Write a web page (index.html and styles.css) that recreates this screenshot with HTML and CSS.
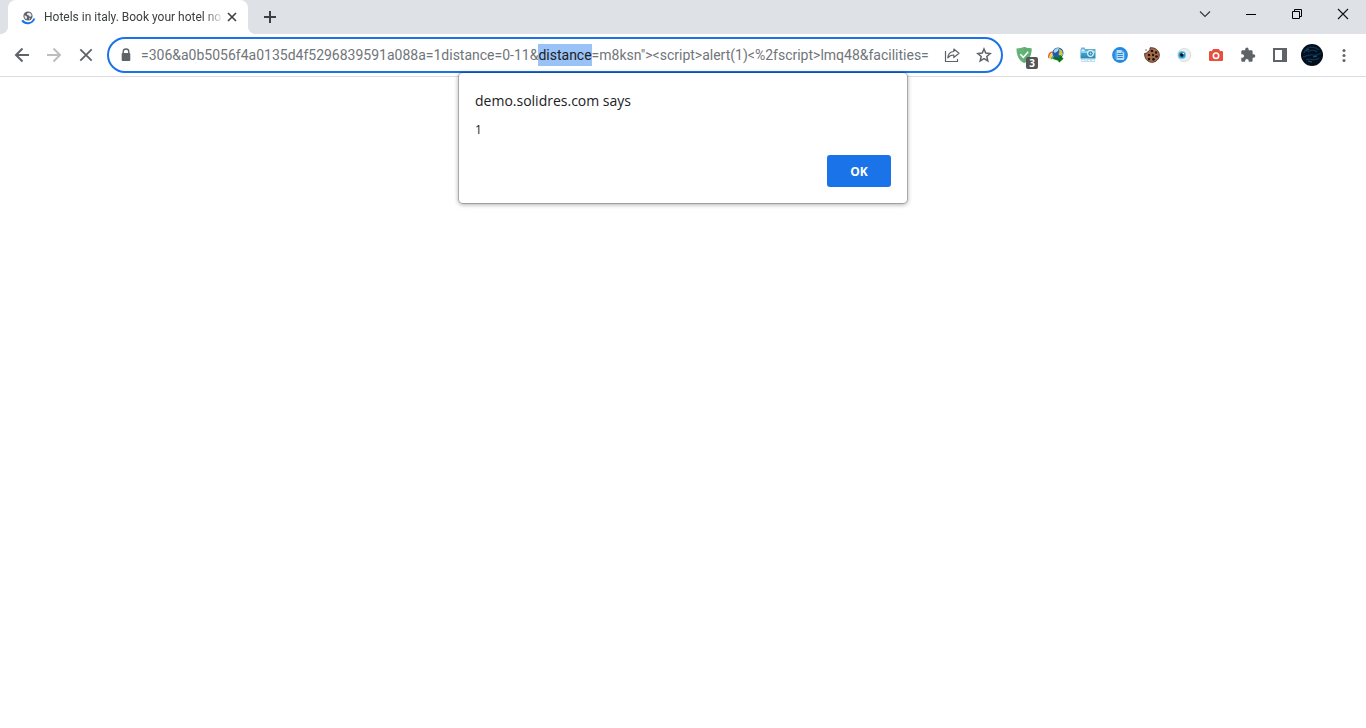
FILE: index.html
```html
<!DOCTYPE html>
<html lang="en">
<head>
<meta charset="utf-8">
<title>Hotels in italy. Book your hotel no</title>
<link rel="stylesheet" href="styles.css">
</head>
<body>
<div class="browser">
  <header class="tabstrip">
    <div class="tab">
      <svg class="favicon" width="16" height="16" viewBox="0 0 16 16" aria-hidden="true">
        <circle cx="8" cy="7" r="4.600" fill="#5f6368"/>
        <path d="M4.600 6.200l2.100 1.100.4 1.700-.9 1.200C4.800 9.400 4.300 8 4.600 6.200zM7.300 4.100l2.600-.4 1.800 2.300-.8 1.800-2-.5-.5-1.200-1.600-.4zM9 9.300l1.500-.1-1.300 1.500z" fill="#e8eaed"/>
        <path d="M2.200 11.400C5 15.300 12 15.600 14.300 9.500" fill="none" stroke="#1a73e8" stroke-width="2"/>
      </svg>
      <span class="tab-title">Hotels in italy. Book your hotel no</span>
      <button class="tab-close" aria-label="Close tab"><svg width="16" height="16" viewBox="0 0 16 16"><path d="M4 4l8 8M12 4l-8 8" stroke="#3c4043" stroke-width="1.600"/></svg></button>
    </div>
    <button class="new-tab" aria-label="New tab"><svg width="16" height="16" viewBox="0 0 16 16"><path d="M8 2v12M2 8h12" stroke="#3c4043" stroke-width="2"/></svg></button>
    <div class="window-controls">
      <button aria-label="Search tabs"><svg width="12" height="12" viewBox="0 0 12 12"><path d="M1 3.500l5 5 5-5" fill="none" stroke="#333" stroke-width="1.100"/></svg></button>
      <button aria-label="Minimize"><svg width="12" height="12" viewBox="0 0 12 12"><path d="M1 6.500h10" stroke="#000"/></svg></button>
      <button aria-label="Restore"><svg width="12" height="12" viewBox="0 0 12 12"><path d="M1.500 3.500h7v7h-7zM3.500 3.500v-2h7v7h-2" fill="none" stroke="#000"/></svg></button>
      <button aria-label="Close"><svg width="12" height="12" viewBox="0 0 12 12"><path d="M1 1l10 10M11 1L1 11" stroke="#111" stroke-width="1.100"/></svg></button>
    </div>
  </header>

  <div class="toolbar">
    <nav class="nav">
      <button aria-label="Back"><svg width="16" height="16" viewBox="0 0 16 16"><path d="M15 8H2M8.500 1.500L2 8l6.500 6.500" fill="none" stroke="#5f6368" stroke-width="2"/></svg></button>
      <button aria-label="Forward" disabled><svg width="16" height="16" viewBox="0 0 16 16"><path d="M1 8h13M7.500 1.500L14 8l-6.500 6.500" fill="none" stroke="#bcbec0" stroke-width="2"/></svg></button>
      <button aria-label="Stop"><svg width="16" height="16" viewBox="0 0 16 16"><path d="M2.300 2.300l11.400 11.400M13.700 2.300L2.300 13.700" stroke="#5f6368" stroke-width="1.800"/></svg></button>
    </nav>

    <div class="omnibox">
      <button class="lock" aria-label="Site information"><svg width="16" height="16" viewBox="0 0 16 16"><path d="M5.200 7V4.800a2.800 2.800 0 0 1 5.600 0V7" fill="none" stroke="#5f6368" stroke-width="1.400"/><rect x="3.700" y="6" width="8.600" height="8" rx="1" fill="#5f6368"/></svg></button>
      <input class="url" id="url" type="text" aria-label="Address" spellcheck="false" autocomplete="off" value="=306&amp;a0b5056f4a0135d4f5296839591a088a=1distance=0-11&amp;distance=m8ksn&quot;&gt;&lt;script&gt;alert(1)&lt;%2fscript&gt;lmq48&amp;facilities=">
      <button class="action" aria-label="Share"><svg width="16" height="16" viewBox="0 0 16 16"><path d="M1.500 4v10.500h12V12" fill="none" stroke="#5f6368" stroke-width="1.200"/><path d="M9.800 2l5.200 4.300-5.200 4.200V8C7 8 5.200 8.800 3.800 10.800 4 7.500 6 4.800 9.800 4.500z" fill="none" stroke="#5f6368" stroke-width="1.200" stroke-linejoin="round"/></svg></button>
      <button class="action" aria-label="Bookmark this page"><svg width="16" height="16" viewBox="0 0 16 16"><path d="M8 2l1.700 4.100 4.500.4-3.400 3 1 4.400L8 11.600l-3.800 2.300 1-4.400-3.400-3 4.500-.4z" fill="none" stroke="#5f6368" stroke-width="1.500"/></svg></button>
    </div>

    <div class="extensions">
      <button class="guard" aria-label="Ad blocker, 3 blocked"><svg width="16" height="16" viewBox="0 0 16 16"><path d="M8 0c2 .8 4.500 1.400 7.500 1.400C15.500 8 13.500 13 8 16 2.500 13 .5 8 .5 1.400 3.500 1.400 6 .8 8 0z" fill="#67b279"/><path d="M8 0c2 .8 4.500 1.400 7.500 1.400C15.500 8 13.500 13 8 16z" fill="#5fae72"/><path d="M4.300 7.300l3 3 4.900-5.500" fill="none" stroke="#fff" stroke-width="1.500"/></svg><span class="badge">3</span></button>
      <button aria-label="Download manager"><svg width="16" height="16" viewBox="0 0 16 16"><path d="M1 11C0 6 4 3.500 9 6" fill="none" stroke="#e9593b" stroke-width="1.600"/><path d="M2.300 12C1.500 8 5 5.500 9 7.500" fill="none" stroke="#f5d52b" stroke-width="1.600"/><path d="M3.600 12.300C3.500 9 6 7.500 9 9" fill="none" stroke="#42b956" stroke-width="1.500"/><path d="M4.800 12C5 10 7 9 9 10" fill="none" stroke="#4a7fe0" stroke-width="1.200"/><circle cx="10" cy="6" r="5.500" fill="#2457b4"/><path d="M5.500 4.500C6.500 1.500 9 .8 11 1L10 4 7 6z" fill="#a7d6f5"/><path d="M11 1.500l3 2 1 4-2 2-2.500-2 .8-2.500z" fill="#c3cf42"/><path d="M6 9.500l5.500 1.200.5-3 3.500 4-4.500 4-.8-2-5.200-1.700z" fill="#0c7419"/></svg></button>
      <button aria-label="Screen capture"><svg width="16" height="16" viewBox="0 0 16 16"><defs><linearGradient id="cam" x2="0" y2="1"><stop stop-color="#6bbddd"/><stop offset="1" stop-color="#2387b8"/></linearGradient></defs><path d="M1 .5h4V2h10.500v9.500H.5V2H1z" fill="url(#cam)"/><path d="M.5 4h15v2H.5z" fill="#8fd2ea"/><path d="M1.500 2.500h3V4h-3z" fill="#e7f8ff"/><circle cx="10.500" cy="6.500" r="3.400" fill="#e6f6fb"/><circle cx="10.500" cy="6.500" r="2.200" fill="#287eab"/><circle cx="10.500" cy="6.500" r="1" fill="#bce8f8"/><path d="M1 12h14v3H1z" fill="#bfe0ee"/><path d="M2 13.500h2M6 14v-1.500M8 13.500h2M12 13.500h2" stroke="#fff"/></svg></button>
      <button aria-label="Page notes"><svg width="16" height="16" viewBox="0 0 16 16"><circle cx="8" cy="8" r="7.900" fill="#2389e0"/><path d="M4.500 3h5.200L12 5.300V13H4.500z" fill="#badfff"/><path d="M9.500 3v2.500H12" fill="#64afe9"/><path d="M5.500 6.500h5.300M5.500 8.500h5.300M5.500 10.500h5.300" stroke="#3284c9"/><path d="M3.300 5v7M12.700 5v7" stroke="#60b5f6" stroke-width=".8"/></svg></button>
      <button aria-label="Cookie editor"><svg width="16" height="16" viewBox="0 0 16 16"><path d="M6 .8c.3 2-.5 3.500-2 3.500C4 5.800 2.500 6.300.7 6.300.1 11 3.500 15.300 8 15.300c4 0 7.300-3.300 7.300-7.300C15.300 3.500 11 .1 6 .8z" fill="#a66c4c" stroke="#4a2c20" stroke-width=".9"/><g fill="#20120d"><circle cx="8" cy="4" r="1.300"/><circle cx="12" cy="5.500" r="1.200"/><circle cx="5" cy="8" r="1.300"/><circle cx="9" cy="8" r="1.200"/><circle cx="12.500" cy="9.500" r="1.300"/><circle cx="5" cy="12" r="1.200"/><circle cx="9.500" cy="12.300" r="1.400"/></g><circle cx="2" cy="3" r=".7" fill="#5c3828"/></svg></button>
      <button aria-label="Eye viewer"><svg width="16" height="16" viewBox="0 0 16 16"><circle cx="8.300" cy="8" r="6.500" fill="#eff0f0" stroke="#d8dada"/><circle cx="6" cy="8" r="4" fill="#6cc3e8"/><circle cx="6" cy="8" r="3" fill="#2a93c6"/><circle cx="5.800" cy="8" r="1.700" fill="#06111b"/><circle cx="7.300" cy="6.500" r=".8" fill="#fff"/></svg></button>
      <button aria-label="Screenshot"><svg width="16" height="16" viewBox="0 0 16 16"><path d="M5 2h6l1 2h2q1 0 1 1v8q0 1-1 1H2q-1 0-1-1V5q0-1 1-1h2z" fill="#e94f3e"/><circle cx="8" cy="8.700" r="2.700" fill="none" stroke="#fff" stroke-width="1.600"/></svg></button>
      <button aria-label="Extensions"><svg width="16" height="16" viewBox="0 0 16 16"><path d="M13.600 7.300h-1V4.600c0-.7-.6-1.300-1.300-1.300H8.600v-1a1.700 1.700 0 0 0-3.400 0v1H2.600c-.8 0-1.300.6-1.300 1.300v2.600h1a1.800 1.800 0 0 1 0 3.600h-1v2.600c0 .7.500 1.300 1.300 1.300h2.500v-1a1.800 1.800 0 0 1 3.600 0v1h2.600c.7 0 1.300-.6 1.300-1.300v-2.700h1a1.700 1.700 0 0 0 0-3.400z" fill="#5f6368"/></svg></button>
      <button aria-label="Side panel"><svg width="16" height="16" viewBox="0 0 16 16"><path d="M1 1h14v14H1zM3 3v10h7V3z" fill="#5f6368" fill-rule="evenodd"/></svg></button>
      <button aria-label="Profile"><svg width="22" height="22" viewBox="0 0 22 22"><circle cx="11" cy="11" r="11" fill="#03101c"/><path d="M3 9C5 3 12 1 18 6M2 13c4-1 7-3 10-2s5 0 8-2M5 16c3-3 9 2 13-2M7 8c3-3 7-2 9 0" fill="none" stroke="#0d3558" stroke-width="1.300"/><path d="M5 7l3-2M12 13l4-1M7 17l4 1" stroke="#215f8b"/></svg></button>
      <button aria-label="Menu"><svg width="16" height="16" viewBox="0 0 16 16" fill="#5f6368"><circle cx="8" cy="3.500" r="1.500"/><circle cx="8" cy="8.500" r="1.500"/><circle cx="8" cy="13.500" r="1.500"/></svg></button>
    </div>
  </div>

  <main class="page">
    <section class="dialog" role="alertdialog" aria-labelledby="dialog-title" aria-describedby="dialog-text">
      <h1 id="dialog-title">demo.solidres.com says</h1>
      <p id="dialog-text">1</p>
      <button class="ok">OK</button>
    </section>
  </main>
</div>
<script src="script.js"></script>
</body>
</html>
```
FILE: styles.css
```css
* { box-sizing: border-box; }
body {
  margin: 0;
  background: #fff;
  color: #202124;
  font-family: "Open Sans", "Noto Sans", sans-serif;
}
button {
  display: flex;
  align-items: center;
  justify-content: center;
  padding: 0;
  border: 0;
  background: none;
  font-family: inherit;
}
svg { display: block; flex: none; }
.browser { display: flex; flex-direction: column; min-height: 100vh; }

.tabstrip {
  display: flex;
  height: 34px;
  padding-left: 8px;
  background: #dee1e6;
}
.tab {
  position: relative;
  display: flex;
  align-items: center;
  width: 240px;
  padding: 0 8px 0 12px;
  border-radius: 8px 8px 0 0;
  background: #fff;
}
.tab::before,
.tab::after {
  content: "";
  position: absolute;
  bottom: 0;
  width: 8px;
  height: 8px;
}
.tab::before { right: 100%; background: radial-gradient(circle at 0 0, #dee1e6 8px, #fff 8px); }
.tab::after { left: 100%; background: radial-gradient(circle at 100% 0, #dee1e6 8px, #fff 8px); }
.tab-title {
  flex: 1;
  min-width: 0;
  margin-left: 8px;
  overflow: hidden;
  white-space: nowrap;
  font-family: Roboto, "Open Sans", sans-serif;
  font-size: 12px;
  line-height: 16px;
  color: #3c4043;
  mask-image: linear-gradient(to left, transparent, #000 20px);
}
.new-tab { width: 28px; height: 34px; margin-left: 8px; }
.window-controls { display: flex; height: 28px; margin-left: auto; }
.window-controls button { width: 46px; }

.toolbar {
  display: flex;
  align-items: center;
  height: 43px;
  padding: 0 6px;
  border-bottom: 1px solid #dadce0;
}
.nav { display: flex; margin-right: 5px; }
.nav button, .extensions button { width: 32px; height: 32px; }
.omnibox {
  display: flex;
  align-items: center;
  flex: 1;
  min-width: 0;
  height: 36px;
  padding: 0 1px 0 6px;
  border: 2px solid #1a73e8;
  border-radius: 18px;
}
.lock { width: 22px; height: 24px; }
.url {
  flex: 1;
  min-width: 0;
  height: 22px;
  margin-left: 4px;
  padding: 0;
  border: 0;
  outline: 0;
  background: none;
  color: #70757a;
  font-family: Roboto, "Open Sans", sans-serif;
  font-size: 14px;
  line-height: 22px;
}
.url::selection { background: #99c2f7; color: #202124; }
.action { width: 32px; height: 32px; }
.extensions { display: flex; margin-left: 5px; }
.guard { position: relative; }
.badge {
  position: absolute;
  right: 2px;
  bottom: 2px;
  width: 12px;
  height: 12px;
  border-radius: 2px;
  background: #555;
  color: #fff;
  font-size: 10px;
  font-weight: 700;
  line-height: 12px;
  text-align: center;
}

.page { position: relative; flex: 1; }
.dialog {
  position: absolute;
  top: -4px;
  left: 50%;
  display: flex;
  flex-direction: column;
  width: 448px;
  margin-left: -224px;
  padding: 16px;
  border-radius: 4px;
  background: #fff;
  box-shadow: 0 0 0 1px rgba(0, 0, 0, .2), 0 1px 4px 1px rgba(0, 0, 0, .3);
}
.dialog h1 { margin: 0; font-size: 14px; font-weight: 400; line-height: 24px; }
.dialog p { margin: 7px 0 15px; font-size: 12px; line-height: 20px; }
.ok {
  align-self: flex-end;
  width: 64px;
  height: 32px;
  border-radius: 3px;
  background: #1a73e8;
  color: #fff;
  font-size: 12px;
  font-weight: 700;
}
```
FILE: script.js
```js
const url = document.getElementById("url");
const start = url.value.lastIndexOf("distance");
url.focus();
url.setSelectionRange(start, start + "distance".length);
```
